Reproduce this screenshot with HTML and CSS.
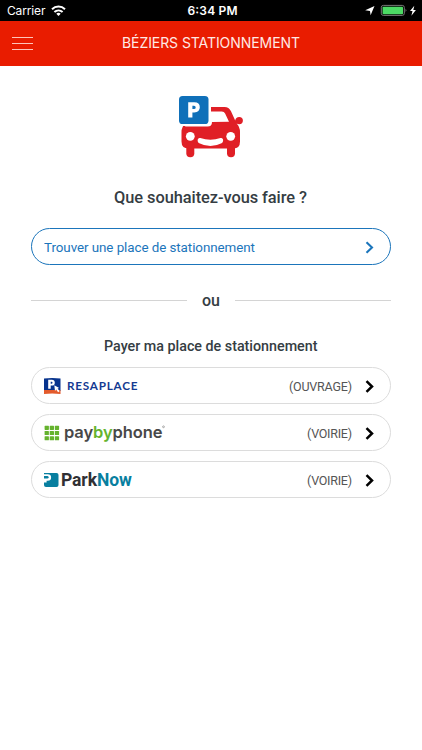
FILE: index.html
```
<!DOCTYPE html>
<html lang="fr">
<head>
<meta charset="utf-8">
<title>Béziers Stationnement</title>
<link rel="stylesheet" href="styles.css">
</head>
<body>
<div class="status">
  <div class="status-left">
    <svg class="carrier" width="40" height="21"><text x="0" y="15" textLength="38.5">Carrier</text></svg>
    <svg class="wifi" width="15" height="12" viewBox="0 0 15 12"><g fill="none" stroke="#fff" stroke-width="2"><path d="M1 4.2a9.3 9.3 0 0 1 13 0"/><path d="M3.4 7a6 6 0 0 1 8.2 0"/></g><path d="M5.3 8.7a3.2 3.2 0 0 1 4.4 0L7.5 11z" fill="#fff"/></svg>
  </div>
  <svg class="clock" width="54" height="21"><text x="3.5" y="15" textLength="50">6:34 PM</text></svg>
  <div class="status-right">
    <svg width="56" height="21" viewBox="0 0 56 21"><path d="M9.500 6 5.600 15.300 5 10.900.2 10.300z" fill="#fff"/><rect x="16.300" y="5.400" width="23" height="10" rx="2" fill="none" stroke="#777"/><rect x="17.600" y="6.700" width="20.400" height="7.500" rx=".8" fill="#4cd964"/><path d="M40.600 8.800q1.800 1.600 0 3.200z" fill="#888"/><path d="M49.300 5.700 45 11h2.500l-1.100 4.700 4.500-5.600h-2.600z" fill="#fff"/></svg>
  </div>
</div>
<header class="bar">
  <div class="burger"><i></i><i></i><i></i></div>
  <svg class="bar-title" width="180" height="44"><text x="1" y="27" textLength="178">BÉZIERS STATIONNEMENT</text></svg>
</header>
<main>
  <svg class="car" width="66" height="64" viewBox="0 0 66 64">
    <g fill="#e01f26">
      <path fill-rule="evenodd" d="M33 11h13.500q4.500 0 6.500 4.300l4.200 9.200q.5-3.600 4-3.600a3.700 3.700 0 0 1 0 7.400q-1.500 0-2.600-.8 3.400 3.500 3.400 8.500v9.500q0 7-6.500 7H10.500q-7 0-7-7V36q0-5 3.700-8.500v3h22.300q4.500 0 4.500-4.500l17-.3-3.900-8.300q-.9-2-3.300-2H33z"/>
      <rect x="8.300" y="46" width="8" height="15.200" rx="4"/><rect x="49" y="46" width="8" height="15.200" rx="4"/>
    </g>
    <g fill="#fff"><circle cx="12.300" cy="40.300" r="4.400"/><circle cx="52.700" cy="40.300" r="4.400"/><path d="M22.300 42q10.100 3.400 20.200 0c3-.9 3.600 3.800 1 5.200q-11.100 5.700-22.200 0c-2.600-1.500-2-6 1-5.200z"/></g>
    <path d="M0 0h32v25.500q0 4.500-4.500 4.500H0z" fill="#fff"/>
    <rect x="1" y="0" width="29.500" height="28" rx="3.600" fill="#0f70b9"/>
    <path fill="#fff" fill-rule="evenodd" d="M10.200 6.200h6.100q5.500 0 5.500 5.100t-5.500 5.100h-1.900v5.100h-4.200zM14.400 9.700v3.400h1.600q1.700 0 1.700-1.700t-1.700-1.700z"/>
  </svg>
  <h1><svg width="196" height="24"><text x="1" y="18" textLength="193">Que souhaitez-vous faire ?</text></svg></h1>
  <a class="pill primary">
    <svg width="214" height="24"><text x="0" y="17" textLength="211">Trouver une place de stationnement</text></svg>
    <svg class="chev" width="9" height="13" viewBox="0 0 9 13"><path d="M1.500 1.200 7 6.500 1.500 11.800"/></svg>
  </a>
  <div class="divider"><i></i><span>ou</span><i></i></div>
  <h2><svg width="216" height="22"><text x="1" y="16" textLength="213.500">Payer ma place de stationnement</text></svg></h2>
  <div class="options">
    <a class="pill">
      <svg width="124" height="24" viewBox="0 0 124 24"><path d="M0 4.500q8-1 16.500 0V17H0z" fill="#07338d"/><path d="M0 16h16.500v4Q8 19 0 20z" fill="#e35b2c"/><path fill="#fff" fill-rule="evenodd" d="M4.200 5.800h3.600q3 0 3 2.900t-3 2.900H6.700v3.100H4.200zM6.700 7.800v1.900h.8q1 0 1-1t-1-.9z"/><path d="M10.300 11.300 15.200 14l-1.600.5 2 2.800-1.500 1-1.900-2.800-1.200 1.400z" fill="#fff"/><text class="resa" x="23" y="16.300" textLength="70.500">RESAPLACE</text></svg>
      <span class="zone"><svg width="65" height="24"><text x="64" y="16.500" text-anchor="end" textLength="63">(OUVRAGE)</text></svg></span>
      <svg class="chev" width="9" height="13" viewBox="0 0 9 13"><path d="M1.500 1.200 7 6.500 1.500 11.800"/></svg>
    </a>
    <a class="pill">
      <svg width="124" height="24" viewBox="0 0 124 24"><g fill="#65b32e"><rect x=".6" y="4.800" width="4.300" height="4.100" rx=".6"/><rect x="5.700" y="4.800" width="4.300" height="4.100" rx=".6"/><rect x="10.800" y="4.800" width="4.300" height="4.100" rx=".6"/><rect x=".6" y="10" width="4.300" height="4.100" rx=".6"/><rect x="5.700" y="10" width="4.300" height="4.100" rx=".6"/><rect x="10.800" y="10" width="4.300" height="4.100" rx=".6"/><rect x=".6" y="15.200" width="4.300" height="4.100" rx=".6"/><rect x="5.700" y="15.200" width="4.300" height="4.100" rx=".6"/><rect x="10.800" y="15.200" width="4.300" height="4.100" rx=".6"/></g><text class="pbp" x="20" y="17" textLength="98.500">pay<tspan class="green">by</tspan>phone</text><circle cx="119.500" cy="5.800" r=".9" fill="none" stroke="#777" stroke-width=".6"/></svg>
      <span class="zone"><svg width="65" height="24"><text x="64" y="16.500" text-anchor="end" textLength="45">(VOIRIE)</text></svg></span>
      <svg class="chev" width="9" height="13" viewBox="0 0 9 13"><path d="M1.500 1.200 7 6.500 1.500 11.800"/></svg>
    </a>
    <a class="pill">
      <svg width="17" height="24" viewBox="0 0 17 24"><path d="M2 5h10.500q2 0 2 2v10q0 2-2 2H2q-2 0-2-2V5z" fill="#087fa0"/><path d="M0 6.200h3.800a3.300 3.300 0 0 1 0 6.600H2.600v1.800H0z" fill="#fff"/><path d="M0 8h3.300q1.300 0 1.300 1.300t-1.300 1.300H0z" fill="#087fa0"/></svg>
      <span class="parknow">Park<b>Now</b></span>
      <span class="zone"><svg width="65" height="24"><text x="64" y="16.500" text-anchor="end" textLength="45">(VOIRIE)</text></svg></span>
      <svg class="chev" width="9" height="13" viewBox="0 0 9 13"><path d="M1.500 1.200 7 6.500 1.500 11.800"/></svg>
    </a>
  </div>
</main>
</body>
</html>
```
FILE: styles.css
```
* { box-sizing: border-box; }
body { margin: 0; width: 422px; height: 750px; overflow: hidden; background: #fff; font-family: Roboto, sans-serif; color: #353d43; }
svg { display: block; flex: none; }
svg text { fill: currentColor; }
.status { height: 21px; background: #000; color: #fff; display: grid; grid-template-columns: 1fr 54px 1fr; font-family: Inter, sans-serif; font-size: 12px; }
.status-left { display: flex; padding-left: 7px; }
.carrier { margin-right: 4px; }
.wifi { margin-top: 5px; }
.clock { font-weight: 600; }
.status-right { display: flex; justify-content: flex-end; padding-right: 1px; }
.bar { height: 44.500px; background: #e91c00; color: #ffe9e5; display: flex; align-items: center; padding-left: 12px; }
.burger { width: 21px; height: 13px; display: flex; flex-direction: column; justify-content: space-between; margin-right: 88px; }
.burger i { height: 1px; background: #ffc4ba; }
.bar-title { font-family: Inter, sans-serif; font-size: 14px; }
main { padding: 30.500px 31px 0; display: flex; flex-direction: column; align-items: center; }
h1, h2 { margin: 0; font-weight: 500; }
h1 { font-size: 16.400px; margin-top: 25px; }
.pill { width: 360px; height: 37px; border: 1px solid #dcdcdc; border-radius: 19px; display: flex; align-items: center; padding: 0 16px 0 12px; font-size: 13px; }
.primary { margin-top: 19px; border-color: #1b75bb; color: #1b75bb; justify-content: space-between; font-size: 13.400px; }
.chev { fill: none; stroke: #000; stroke-width: 2.500; margin-top: 1px; }
.primary .chev { stroke: #1b75bb; stroke-width: 2.100; margin-top: 2px; }
.divider { width: 360px; height: 22px; margin-top: 24px; display: flex; align-items: center; gap: 15px; font-size: 16px; font-weight: 500; line-height: 22px; }
.divider span { padding-top: 2px; }
.divider i { flex: 1; height: 1px; background: #d4d4d4; }
h2 { font-size: 14.300px; margin-top: 24px; }
.options { display: flex; flex-direction: column; gap: 10px; margin-top: 10px; }
.zone { margin-left: auto; margin-right: 12px; font-size: 12.500px; color: #555; }
.resa { font: 700 11.700px Lato, sans-serif; fill: #153a92; }
.pbp { font: 600 16.500px Inter, sans-serif; fill: #484848; }
.pbp .green { fill: #65b32e; }
.parknow { font: 700 17.500px/24px Roboto, sans-serif; letter-spacing: -.1px; color: #303034; }
.parknow b { font-weight: 700; color: #087fa0; }
```
